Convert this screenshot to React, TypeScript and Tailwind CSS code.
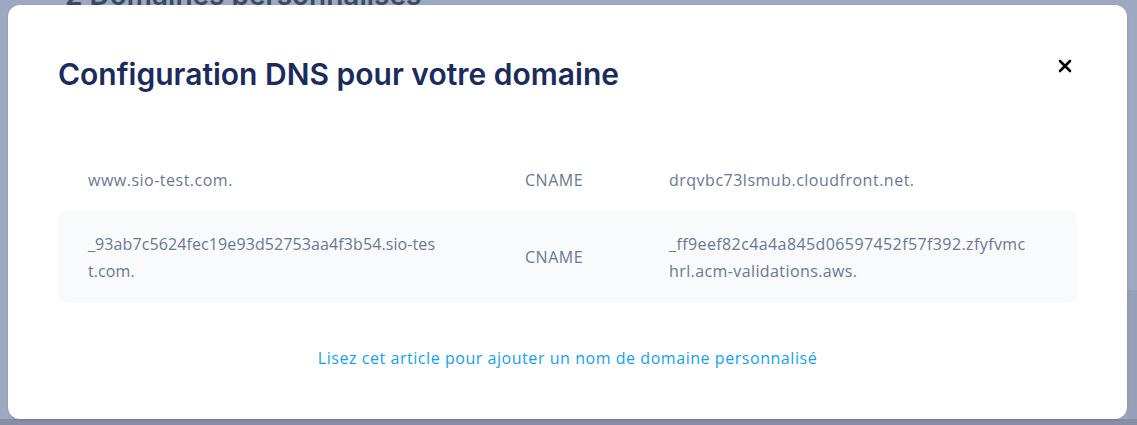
import React from "react";

export default function App() {
  return (
    <div className="relative h-[425px] w-[1137px] overflow-hidden bg-[#9ea8c0]" style={{ fontFamily: "Inter, 'Noto Sans', sans-serif" }}>
      {/* page behind overlay */}
      <div className="absolute left-[65px] top-[-26px] text-[28px] font-semibold text-[#3d4868]">2 Domaines personnalisés</div>
      <div className="absolute bottom-0 left-0 right-0 h-[6px] bg-[#868da4]" />
      <div className="absolute right-0 top-[290px] bottom-[6px] w-[10px] bg-[#96a0b9]" />

      {/* modal */}
      <div className="absolute left-[8px] top-[5px] flex h-[414px] w-[1119px] flex-col rounded-[12px] bg-white px-[50px] pt-[51px] shadow-sm">
        <div className="flex items-start justify-between">
          <h2 className="text-[30px] font-semibold leading-[36px] text-[#1b2c5c]">Configuration DNS pour votre domaine</h2>
          <button className="mr-[4px] mt-[2px] flex h-[16px] w-[16px] items-center justify-center text-black">
            <svg width="14" height="14" viewBox="0 0 14 14" fill="none" stroke="currentColor" strokeWidth="2.6" strokeLinecap="round">
              <path d="M2 2 L12 12 M12 2 L2 12" />
            </svg>
          </button>
        </div>

        <div className="mt-[57px] text-[16px] tracking-[0.5px] text-[#6b7891]" style={{ fontFamily: "'Open Sans', 'Noto Sans', sans-serif" }}>
          <div className="grid h-[62px] grid-cols-[437px_144px_438px] items-center">
            <div className="px-[30px]">www.sio-test.com.</div>
            <div className="px-[30px]">CNAME</div>
            <div className="px-[30px]">drqvbc73lsmub.cloudfront.net.</div>
          </div>
          <div className="grid h-[92px] grid-cols-[437px_144px_438px] items-center rounded-[8px] bg-[#f8fafc] pt-[1px] leading-[27px]">
            <div className="px-[30px] tracking-[0.1px]">_93ab7c5624fec19e93d52753aa4f3b54.sio-tes<br />t.com.</div>
            <div className="px-[30px]">CNAME</div>
            <div className="px-[30px] tracking-[0.4px]">_ff9eef82c4a4a845d06597452f57f392.zfyfvmc<br />hrl.acm-validations.aws.</div>
          </div>
        </div>

        <div className="mt-[43px] text-center text-[16px] tracking-[0.55px] text-[#139ff0]" style={{ fontFamily: "'Open Sans', 'Noto Sans', sans-serif" }}>
          <a>Lisez cet article pour ajouter un nom de domaine personnalisé</a>
        </div>
      </div>
    </div>
  );
}
